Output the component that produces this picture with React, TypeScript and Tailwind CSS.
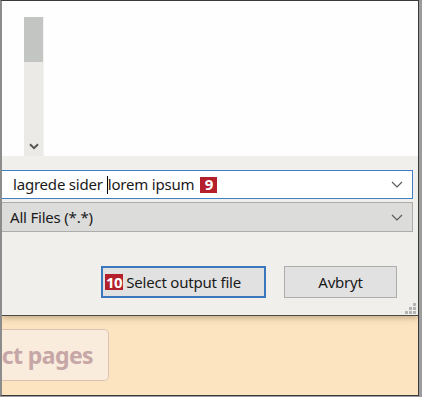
import React from "react";

function Chevron({ className = "" }: { className?: string }) {
  return (
    <svg width="12" height="7" viewBox="0 0 12 7" className={className}>
      <path d="M1 1 L6 6 L11 1" fill="none" stroke="#5a5a5a" strokeWidth="1.2" />
    </svg>
  );
}

function Badge({ children }: { children: React.ReactNode }) {
  return (
    <span className="inline-flex items-center justify-center h-[16px] min-w-[17px] px-[1px] bg-[#b3202c] text-white font-bold text-[15px] leading-none tracking-[-0.5px]">
      {children}
    </span>
  );
}

export default function App() {
  return (
    <div
      className="w-[422px] h-[397px] bg-[#9c9c9c] overflow-hidden"
      style={{ fontFamily: '"Noto Sans", "Open Sans", sans-serif' }}
    >
      <div className="w-[419px] h-[396px] border-t border-r border-b border-[#3a3a3a] border-l-2 border-l-[#8c8c8c] bg-[#fce4c1] flex flex-col overflow-hidden">
        {/* dialog */}
        <div className="relative z-10 h-[315px] shrink-0 flex flex-col bg-[#f0efec] border-b border-[#4a4a4a] shadow-[0_2px_6px_rgba(90,60,20,0.35)]">
          {/* white list area */}
          <div className="h-[155px] shrink-0 bg-[#fefefe] pl-[22px] pt-[16px] flex">
            <div className="w-[20px] h-full bg-[#ebeae7] border-r border-r-[#f3f3f3] flex flex-col">
              <div className="h-[45px] bg-[#c3c5c2]" />
              <div className="flex-1" />
              <div className="h-[20px] flex items-center justify-center">
                <svg width="10" height="7" viewBox="0 0 10 7">
                  <path d="M1 1.2 L5 5.2 L9 1.2" fill="none" stroke="#555" strokeWidth="2" />
                </svg>
              </div>
            </div>
          </div>

          {/* file name input */}
          <div className="mt-[14px] mr-[5px] h-[29px] bg-white border border-l-0 border-[#3f7fc4] flex items-center pl-[11px] pr-[9px]">
            <span className="text-[15px] tracking-[-0.2px] text-[#1a1a1a] whitespace-nowrap flex items-center">
              lagrede sider
              <span className="inline-block w-[1px] h-[18px] bg-black ml-[4px]" />
              lorem ipsum
              <span className="ml-[6px] flex tracking-normal">
                <Badge>9</Badge>
              </span>
            </span>
            <div className="flex-1" />
            <Chevron />
          </div>

          {/* filter */}
          <div className="mt-[3px] mr-[5px] h-[30px] bg-[#dcdcda] border border-l-0 border-[#adadad] flex items-center pl-[8px] pr-[9px]">
            <span className="text-[15px] tracking-[-0.2px] text-[#1a1a1a] whitespace-nowrap">All Files (*.*)</span>
            <div className="flex-1" />
            <Chevron />
          </div>

          {/* buttons */}
          <div className="mt-[34px] flex justify-end gap-[18px] pr-[21px]">
            <div className="w-[165px] h-[32px] bg-[#e1e1e1] border-2 border-[#3a77bd] flex items-center pl-[2px] gap-[3px]">
              <Badge>10</Badge>
              <span className="text-[15px] tracking-[-0.2px] text-[#1a1a1a] whitespace-nowrap">Select output file</span>
            </div>
            <div className="w-[113px] h-[32px] bg-[#e1e1e1] border border-[#adadad] flex items-center justify-center">
              <span className="text-[15px] tracking-[-0.2px] text-[#1a1a1a]">Avbryt</span>
            </div>
          </div>

          {/* grip */}
          <div className="flex-1 flex justify-end items-end pr-[2px] pb-[1px]">
            <div className="grid grid-cols-3 gap-[1px]">
              <span className="w-[3px] h-[3px]" />
              <span className="w-[3px] h-[3px]" />
              <span className="w-[3px] h-[3px] bg-[#b4b4b4]" />
              <span className="w-[3px] h-[3px]" />
              <span className="w-[3px] h-[3px] bg-[#b4b4b4]" />
              <span className="w-[3px] h-[3px] bg-[#b4b4b4]" />
              <span className="w-[3px] h-[3px] bg-[#b4b4b4]" />
              <span className="w-[3px] h-[3px] bg-[#b4b4b4]" />
              <span className="w-[3px] h-[3px] bg-[#b4b4b4]" />
            </div>
          </div>
        </div>

        {/* orange background */}
        <div className="flex-1 pt-[13px]">
          <div className="w-[107px] h-[52px] bg-[#f9ecdc] border border-l-0 border-[#dcc2b4] rounded-r-[5px] flex justify-end items-center pr-[15px] overflow-hidden">
            <span className="text-[23px] tracking-[-0.6px] font-bold text-[#c6a6a6] whitespace-nowrap">ct pages</span>
          </div>
        </div>
      </div>
    </div>
  );
}
